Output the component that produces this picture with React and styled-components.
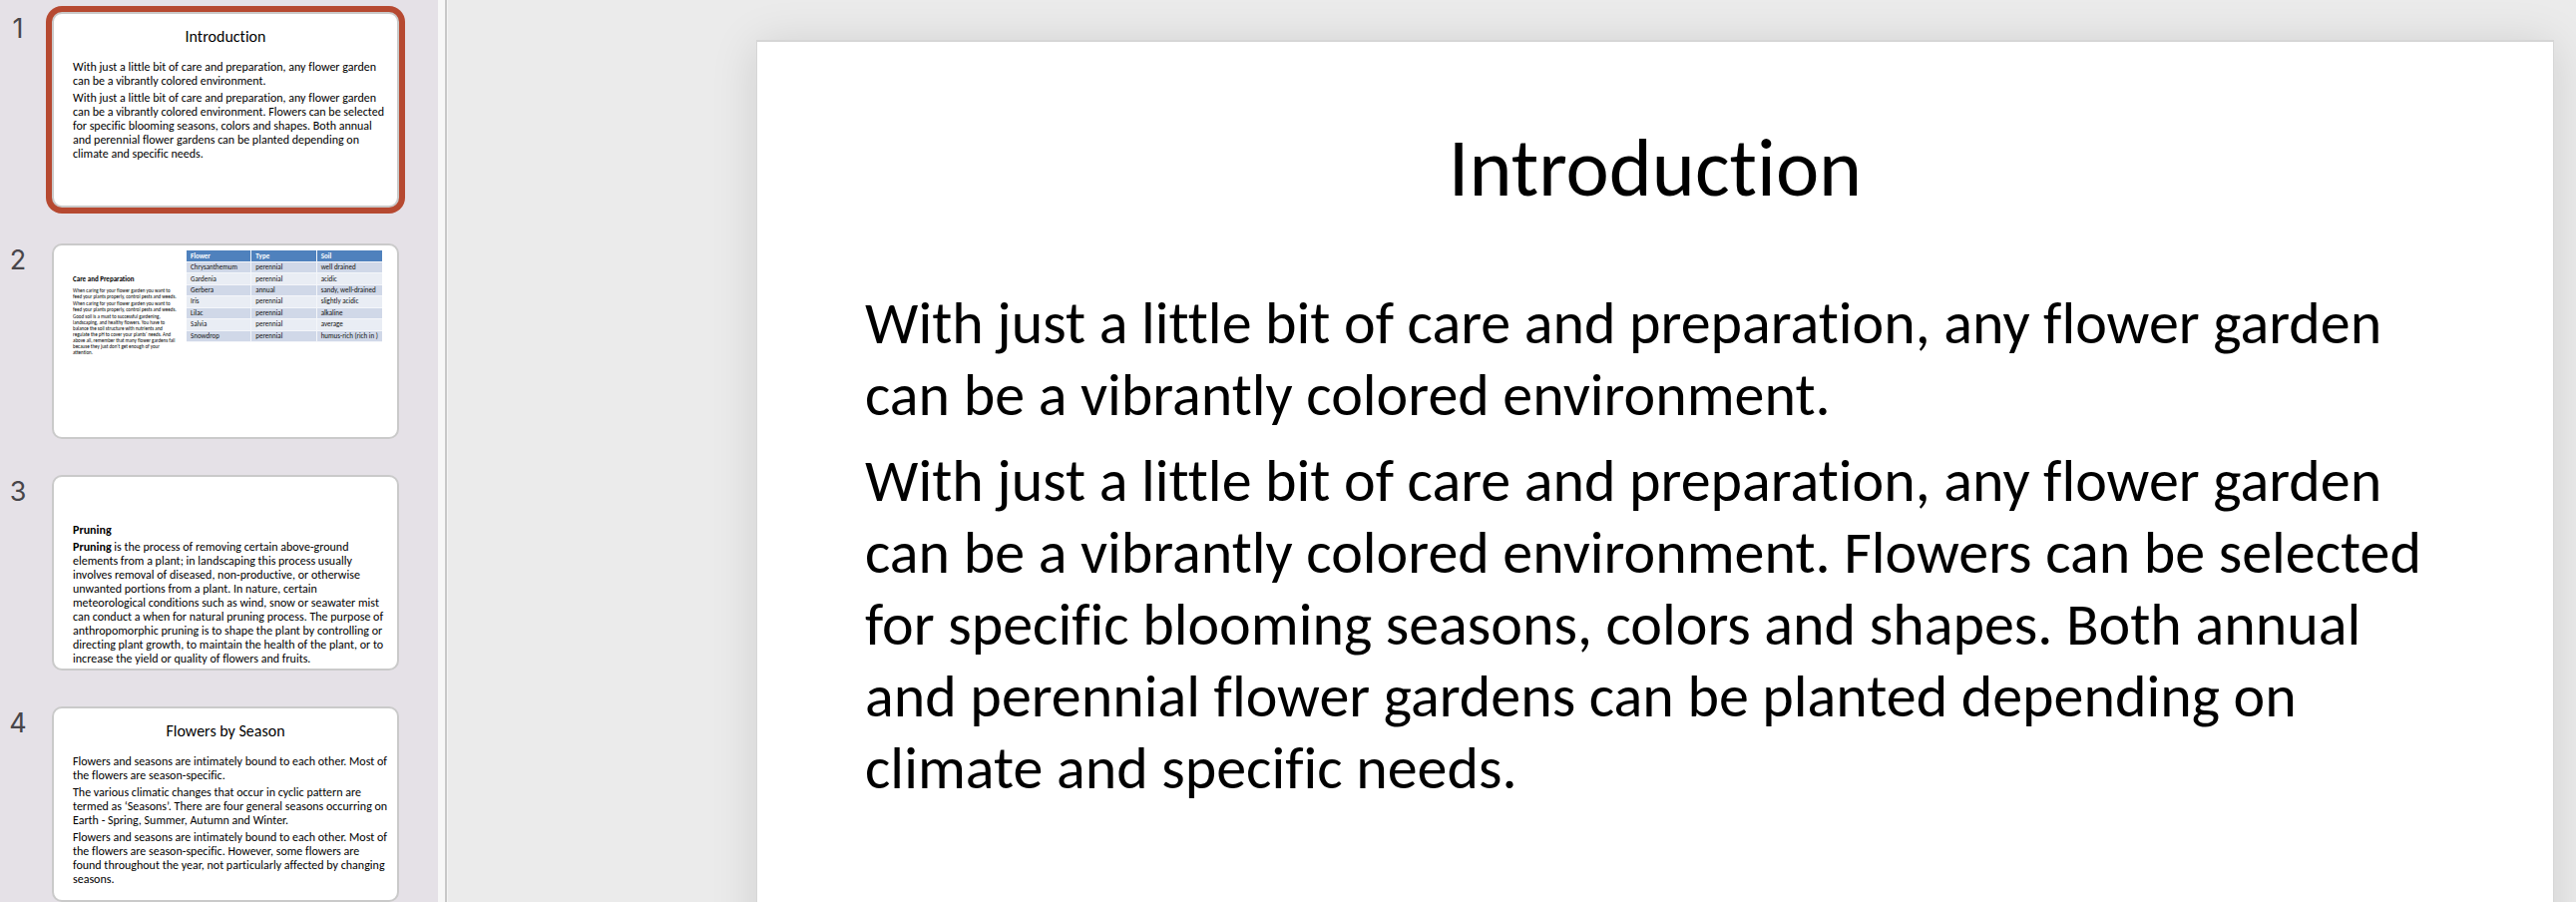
import React from "react";
import styled, { createGlobalStyle, css } from "styled-components";

const GlobalStyle = createGlobalStyle`
  *, *::before, *::after { box-sizing: border-box; }
  body { margin: 0; background: #ebebeb; }
  h2, h3, p, ol { margin: 0; padding: 0; }
`;

const slideFont = css`
  font-family: Carlito, Calibri, Lato, "Open Sans", sans-serif;
  font-variant-ligatures: none;
  color: #000;
`;

const Page = styled.div`
  display: flex;
  height: 100vh;
  overflow: hidden;
`;

const Sidebar = styled.nav`
  flex: none;
  width: 439px;
  overflow: hidden;
  background: #e5e1e7;
`;

const Divider = styled.div`
  flex: none;
  width: 10px;
  background: #f7f7f7;
  border-right: 1px solid #f4f4f4;
  box-shadow: inset -2px 0 #c8c8c8;
`;

const ThumbList = styled.ol`
  display: flex;
  flex-direction: column;
  gap: 36px;
  padding: 12px 39px 0 0;
  list-style: none;
`;

const ThumbItem = styled.li`
  display: flex;
  align-items: flex-start;
`;

const ThumbNumber = styled.span`
  flex: none;
  width: 52px;
  padding: 0 16px 0 0;
  text-align: center;
  font: 27px/34px Inter, "Liberation Sans", sans-serif;
  color: #48464a;
`;

const Thumb = styled.article`
  flex: 1;
  height: 196px;
  padding: 0 15px 0 19px;
  overflow: hidden;
  white-space: nowrap;
  background: #fff;
  border: 2px solid #cacaca;
  border-radius: 10px;
  ${slideFont}
  ${(p) => p.$selected && css`box-shadow: 0 0 0 6px #b64931;`}
`;

const ThumbTitle = styled.h3`
  height: 46px;
  padding: 14px 4px 0 0;
  text-align: center;
  font-size: 16px;
  font-weight: 400;
  line-height: 18px;
`;

const ThumbBody = styled.div`
  display: flex;
  flex-direction: column;
  gap: 3px;
  font-size: 12px;
  line-height: 14px;
`;

const ThumbSplit = styled.div`
  display: flex;
  justify-content: space-between;
  align-items: flex-start;
`;

const NotesColumn = styled.div`
  display: flex;
  flex-direction: column;
  gap: 1px;
  width: 110px;
  padding-top: 29px;
  font-size: 5px;
  line-height: 6px;
`;

const NotesTitle = styled.h3`
  font-size: 7px;
  line-height: 10px;
  padding-bottom: 2px;
`;

const FlowerTable = styled.table`
  width: 196px;
  height: 92px;
  margin: 5px 0 0;
  table-layout: fixed;
  border-collapse: separate;
  border-spacing: 0;
  font-size: 7px;
  line-height: 8px;
  color: #111;
  th, td {
    height: 11px;
    padding: 0 0 0 4px;
    text-align: left;
    border-right: 1px solid #f4f6fa;
    border-bottom: 1px solid #f4f6fa;
  }
  th { height: 12px; background: #4f81bd; color: #fff; }
  th:last-child, td:last-child { border-right: 0; }
  tbody tr { background: #e9edf4; }
  tbody tr:nth-child(odd) { background: #d0d8e8; }
`;

const Stage = styled.main`
  flex: 1;
  min-width: 0;
  padding: 40px 22px 0 309px;
  background: #ebebeb;
`;

const Slide = styled.section`
  aspect-ratio: 16 / 9;
  padding: 76px 108px 0;
  background: #fff;
  border: 1px solid #d6d6d6;
  border-top-width: 2px;
  box-shadow: 0 4px 44px rgba(0, 0, 0, 0.12);
  white-space: nowrap;
  ${slideFont}
`;

const SlideTitle = styled.h2`
  font-size: 82px;
  font-weight: 400;
  line-height: 100px;
  text-align: center;
`;

const SlideBody = styled.div`
  display: flex;
  flex-direction: column;
  gap: 14px;
  padding-top: 70px;
  font-size: 60px;
  line-height: 72px;
`;

const INTRO = [
  [
    "With just a little bit of care and preparation, any flower garden",
    "can be a vibrantly colored environment.",
  ],
  [
    "With just a little bit of care and preparation, any flower garden",
    "can be a vibrantly colored environment. Flowers can be selected",
    "for specific blooming seasons, colors and shapes. Both annual",
    "and perennial flower gardens can be planted depending on",
    "climate and specific needs.",
  ],
];

const CARE = [
  [
    "When caring for your flower garden you want to",
    "feed your plants properly, control pests and weeds.",
  ],
  [
    "When caring for your flower garden you want to",
    "feed your plants properly, control pests and weeds.",
  ],
  [
    "Good soil is a must to successful gardening,",
    "landscaping, and healthy flowers. You have to",
    "balance the soil structure with nutrients and",
    "regulate the pH to cover your plants’ needs. And",
    "above all, remember that many flower gardens fail",
    "because they just don’t get enough of your",
    "attention.",
  ],
];

const FLOWERS = [
  ["Chrysanthemum", "perennial", "well drained"],
  ["Gardenia", "perennial", "acidic"],
  ["Gerbera", "annual", "sandy, well-drained"],
  ["Iris", "perennial", "slightly acidic"],
  ["Lilac", "perennial", "alkaline"],
  ["Salvia", "perennial", "average"],
  ["Snowdrop", "perennial", "humus-rich (rich in )"],
];

const PRUNING = [
  [<b>Pruning</b>],
  [
    <><b>Pruning</b> is the process of removing certain above-ground</>,
    "elements from a plant; in landscaping this process usually",
    "involves removal of diseased, non-productive, or otherwise",
    "unwanted portions from a plant. In nature, certain",
    "meteorological conditions such as wind, snow or seawater mist",
    "can conduct a when for natural pruning process. The purpose of",
    "anthropomorphic pruning is to shape the plant by controlling or",
    "directing plant growth, to maintain the health of the plant, or to",
    "increase the yield or quality of flowers and fruits.",
  ],
];

const SEASONS = [
  [
    "Flowers and seasons are intimately bound to each other. Most of",
    "the flowers are season-specific.",
  ],
  [
    "The various climatic changes that occur in cyclic pattern are",
    "termed as ‘Seasons’. There are four general seasons occurring on",
    "Earth - Spring, Summer, Autumn and Winter.",
  ],
  [
    "Flowers and seasons are intimately bound to each other. Most of",
    "the flowers are season-specific. However, some flowers are",
    "found throughout the year, not particularly affected by changing",
    "seasons.",
  ],
];

function Paragraphs({ items }) {
  return items.map((lines, i) => (
    <p key={i}>
      {lines.map((line, j) => (
        <React.Fragment key={j}>
          {j > 0 && <br />}
          {line}
        </React.Fragment>
      ))}
    </p>
  ));
}

function TextThumb({ title, items, selected }) {
  return (
    <Thumb $selected={selected} aria-current={selected ? "true" : undefined}>
      <ThumbTitle>{title}</ThumbTitle>
      <ThumbBody>
        <Paragraphs items={items} />
      </ThumbBody>
    </Thumb>
  );
}

function CareThumb() {
  return (
    <Thumb>
      <ThumbSplit>
        <NotesColumn>
          <NotesTitle>Care and Preparation</NotesTitle>
          <Paragraphs items={CARE} />
        </NotesColumn>
        <FlowerTable>
          <thead>
            <tr>
              <th scope="col">Flower</th>
              <th scope="col">Type</th>
              <th scope="col">Soil</th>
            </tr>
          </thead>
          <tbody>
            {FLOWERS.map((row) => (
              <tr key={row[0]}>
                {row.map((cell) => (
                  <td key={cell}>{cell}</td>
                ))}
              </tr>
            ))}
          </tbody>
        </FlowerTable>
      </ThumbSplit>
    </Thumb>
  );
}

export default function App() {
  const thumbs = [
    <TextThumb title="Introduction" items={INTRO} selected />,
    <CareThumb />,
    <TextThumb title="" items={PRUNING} />,
    <TextThumb title="Flowers by Season" items={SEASONS} />,
  ];
  return (
    <Page>
      <GlobalStyle />
      <Sidebar aria-label="Slides">
        <ThumbList>
          {thumbs.map((thumb, i) => (
            <ThumbItem key={i}>
              <ThumbNumber>{i + 1}</ThumbNumber>
              {thumb}
            </ThumbItem>
          ))}
        </ThumbList>
      </Sidebar>
      <Divider />
      <Stage>
        <Slide>
          <SlideTitle>Introduction</SlideTitle>
          <SlideBody>
            <Paragraphs items={INTRO} />
          </SlideBody>
        </Slide>
      </Stage>
    </Page>
  );
}
